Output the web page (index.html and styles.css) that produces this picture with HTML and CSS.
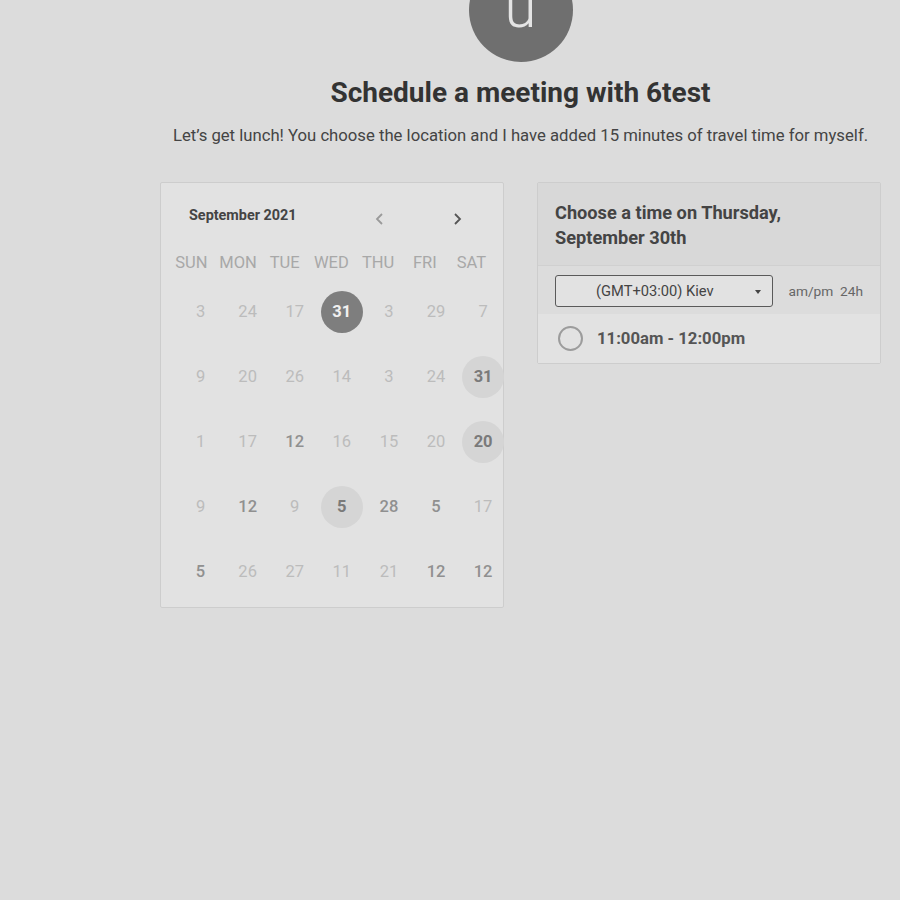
FILE: index.html
```html
<!DOCTYPE html>
<html>
<head>
<meta charset="utf-8">
<link rel="stylesheet" href="styles.css">
</head>
<body>
<div class="page">
  <div class="avatar"><span>u</span></div>
  <h1 class="title">Schedule a meeting with 6test</h1>
  <p class="subtitle">Let’s get lunch! You choose the location and I have added 15 minutes of travel time for myself.</p>
  <div class="cards">
    <div class="calendar">
      <div class="cal-head">
        <span class="month">September 2021</span>
        <span class="nav prev"><svg width="12" height="14" viewBox="0 0 12 14"><path d="M8 2 L3 7 L8 12" fill="none" stroke="#9a9a9a" stroke-width="1.8"/></svg></span>
        <span class="nav next"><svg width="12" height="14" viewBox="0 0 12 14"><path d="M4 2 L9 7 L4 12" fill="none" stroke="#555" stroke-width="1.8"/></svg></span>
      </div>
      <div class="weekdays">
        <div class="wd">SUN</div><div class="wd">MON</div><div class="wd">TUE</div><div class="wd">WED</div><div class="wd">THU</div><div class="wd">FRI</div><div class="wd">SAT</div>
      </div>
      <div class="grid">
        <div class="d dim">3</div><div class="d dim">24</div><div class="d dim">17</div><div class="d"><span class="sel">31</span></div><div class="d dim">3</div><div class="d dim">29</div><div class="d dim">7</div>

        <div class="d dim">9</div><div class="d dim">20</div><div class="d dim">26</div><div class="d dim">14</div><div class="d dim">3</div><div class="d dim">24</div><div class="d"><span class="mark">31</span></div>

        <div class="d dim">1</div><div class="d dim">17</div><div class="d av">12</div><div class="d dim">16</div><div class="d dim">15</div><div class="d dim">20</div><div class="d"><span class="mark">20</span></div>

        <div class="d dim">9</div><div class="d av">12</div><div class="d dim">9</div><div class="d"><span class="mark">5</span></div><div class="d av">28</div><div class="d av">5</div><div class="d dim">17</div>

        <div class="d av">5</div><div class="d dim">26</div><div class="d dim">27</div><div class="d dim">11</div><div class="d dim">21</div><div class="d av">12</div><div class="d av">12</div>
      </div>
    </div>
    <div class="times">
      <div class="times-head">Choose a time on Thursday,<br>September 30th</div>
      <div class="tz-row">
        <div class="select"><span>(GMT+03:00) Kiev</span><span class="caret"></span></div>
        <div class="fmt">am/pm&nbsp;&nbsp;24h</div>
      </div>
      <div class="slot">
        <span class="radio"></span>
        <span class="slot-text">11:00am - 12:00pm</span>
      </div>
    </div>
  </div>
</div>
</body>
</html>
```

FILE: styles.css
```css
html, body {
  margin: 0;
  padding: 0;
  background: #dcdcdc;
  font-family: Roboto, "Liberation Sans", sans-serif;
  overflow: hidden;
}

.page {
  width: 721px;
  margin-left: 160px;
  display: flex;
  flex-direction: column;
  align-items: center;
}

.avatar {
  width: 104px;
  height: 104px;
  margin-top: -42px;
  border-radius: 50%;
  background: #6f6f6f;
  display: flex;
  justify-content: center;
  align-items: flex-end;
}

.avatar span {
  color: #e4e4e4;
  font-size: 58px;
  font-weight: 300;
  line-height: 58px;
  margin-bottom: 26px;
}

.title {
  margin: 15px 0 0;
  font-size: 28px;
  line-height: 32px;
  font-weight: 700;
  color: #333;
  letter-spacing: 0;
}

.subtitle {
  margin: 17px 0 0;
  font-size: 16.7px;
  line-height: 20px;
  color: #444;
  white-space: nowrap;
}

.cards {
  margin-top: 36px;
  width: 721px;
  display: flex;
  gap: 33px;
  align-items: flex-start;
}

.calendar {
  box-sizing: border-box;
  width: 344px;
  height: 426px;
  background: #e2e2e2;
  border: 1px solid #cdcdcd;
  border-radius: 2px;
  padding: 18px 0 0 16px;
}

.cal-head {
  width: 329px;
  box-sizing: border-box;
  height: 30px;
  display: flex;
  align-items: center;
  padding-left: 12px;
  padding-right: 34px;
}

.month {
  flex: 1;
  font-size: 14.4px;
  font-weight: 700;
  color: #444;
  margin-top: -2px;
}

.nav {
  width: 30px;
  height: 30px;
  display: flex;
  align-items: center;
  justify-content: center;
  margin-top: 6px;
}

.nav.prev {
  margin-right: 47px;
}

.weekdays {
  margin-top: 15px;
  margin-left: -9px;
  width: 329px;
  height: 32px;
  display: grid;
  grid-template-columns: repeat(7, 46.7px);
}

.wd {
  display: flex;
  align-items: center;
  justify-content: center;
  font-size: 16.5px;
  color: #a8a8a8;
}

.grid {
  margin-top: 1px;
  width: 329px;
  display: grid;
  grid-template-columns: repeat(7, 47.1px);
  grid-template-rows: repeat(5, 65px);
}

.d {
  display: flex;
  align-items: center;
  justify-content: center;
  font-size: 16.5px;
}

.d.dim {
  color: #bcbcbc;
}

.d.av {
  color: #909090;
  font-weight: 500;
}

.sel, .mark {
  width: 42px;
  height: 42px;
  border-radius: 50%;
  display: flex;
  align-items: center;
  justify-content: center;
  font-weight: 700;
}

.sel {
  background: #7e7e7e;
  color: #f0f0f0;
}

.mark {
  background: #d5d5d5;
  color: #7a7a7a;
}

.times {
  box-sizing: border-box;
  width: 344px;
  border: 1px solid #cdcdcd;
  border-radius: 2px;
  background: #e2e2e2;
}

.times-head {
  background: #d8d8d8;
  padding: 17px 17px 15px;
  font-size: 18.2px;
  line-height: 25px;
  font-weight: 700;
  color: #444;
  border-bottom: 1px solid #d0d0d0;
}

.tz-row {
  background: #dcdcdc;
  display: flex;
  align-items: center;
  padding: 9px 17px 7px;
}

.select {
  box-sizing: border-box;
  width: 219px;
  height: 32px;
  border: 1px solid #5a5a5a;
  border-radius: 3px;
  background: #e2e2e2;
  display: flex;
  align-items: center;
  font-size: 14.7px;
  color: #444;
  position: relative;
}

.select span:first-child {
  margin-left: 40px;
}

.caret {
  position: absolute;
  right: 11px;
  top: 14px;
  width: 0;
  height: 0;
  border-left: 3.5px solid transparent;
  border-right: 3.5px solid transparent;
  border-top: 4px solid #444;
}

.fmt {
  margin-left: 16px;
  font-size: 13.7px;
  color: #666;
}

.slot {
  background: #e2e2e2;
  height: 49px;
  display: flex;
  align-items: center;
  padding-left: 20px;
}

.radio {
  box-sizing: border-box;
  width: 25px;
  height: 25px;
  border-radius: 50%;
  border: 2px solid #9c9c9c;
}

.slot-text {
  margin-left: 14px;
  font-size: 16.7px;
  font-weight: 700;
  color: #555;
}
```
